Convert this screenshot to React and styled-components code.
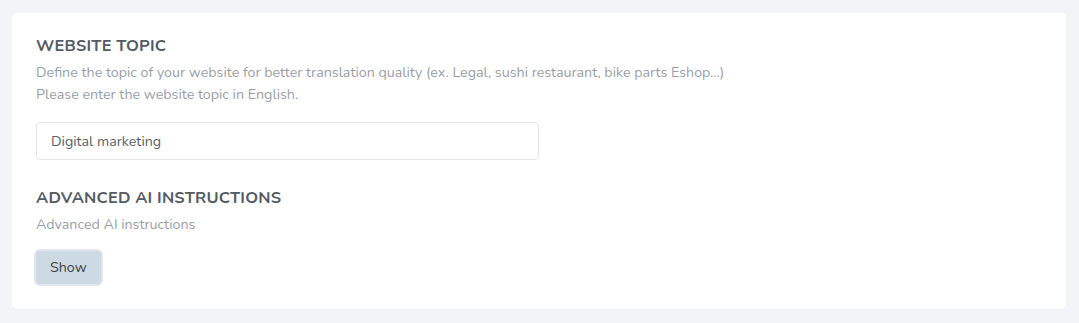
import React from "react";
import styled, { createGlobalStyle } from "styled-components";

const GlobalStyle = createGlobalStyle`
  body {
    margin: 0;
    background: #f3f4f8;
    font-family: "Nunito", "Lato", "Open Sans", sans-serif;
  }
`;

const Page = styled.div`
  padding: 13px 13px 15px 12px;
`;

const Card = styled.section`
  background: #fff;
  border-radius: 5px;
  padding: 21px 24px 25px;
  box-shadow: 0 1px 2px rgba(0, 0, 0, 0.02);
`;

const Title = styled.h3`
  margin: 0 0 4px;
  font-size: 16.4px;
  font-weight: 700;
  letter-spacing: 0.2px;
  color: #545b64;
  line-height: 24px;
`;

const Hint = styled.p`
  margin: 0;
  font-size: 14.25px;
  line-height: 22px;
  color: #999fa8;
`;

const Input = styled.input`
  display: block;
  box-sizing: border-box;
  width: 503px;
  height: 38px;
  margin: 16px 0 26px;
  padding: 0 14px;
  border: 1px solid #e2e5ea;
  border-radius: 4px;
  font-family: inherit;
  font-size: 14.25px;
  color: #5b6168;
  outline: none;
`;

const Button = styled.button`
  margin: 15px 0 0 0;
  padding: 0 14px;
  height: 33px;
  border: none;
  border-radius: 4px;
  background: #cdd9e3;
  box-shadow: 0 0 0 2px #e1e7ee;
  font-family: inherit;
  font-size: 14.25px;
  color: #3c434b;
  cursor: pointer;
`;

export default function App() {
  return (
    <>
      <GlobalStyle />
      <Page>
        <Card>
          <Title>WEBSITE TOPIC</Title>
          <Hint>
            Define the topic of your website for better translation quality (ex. Legal, sushi restaurant, bike parts Eshop...)
            <br />
            Please enter the website topic in English.
          </Hint>
          <Input defaultValue="Digital marketing" />
          <Title>ADVANCED AI INSTRUCTIONS</Title>
          <Hint>Advanced AI instructions</Hint>
          <Button>Show</Button>
        </Card>
      </Page>
    </>
  );
}
